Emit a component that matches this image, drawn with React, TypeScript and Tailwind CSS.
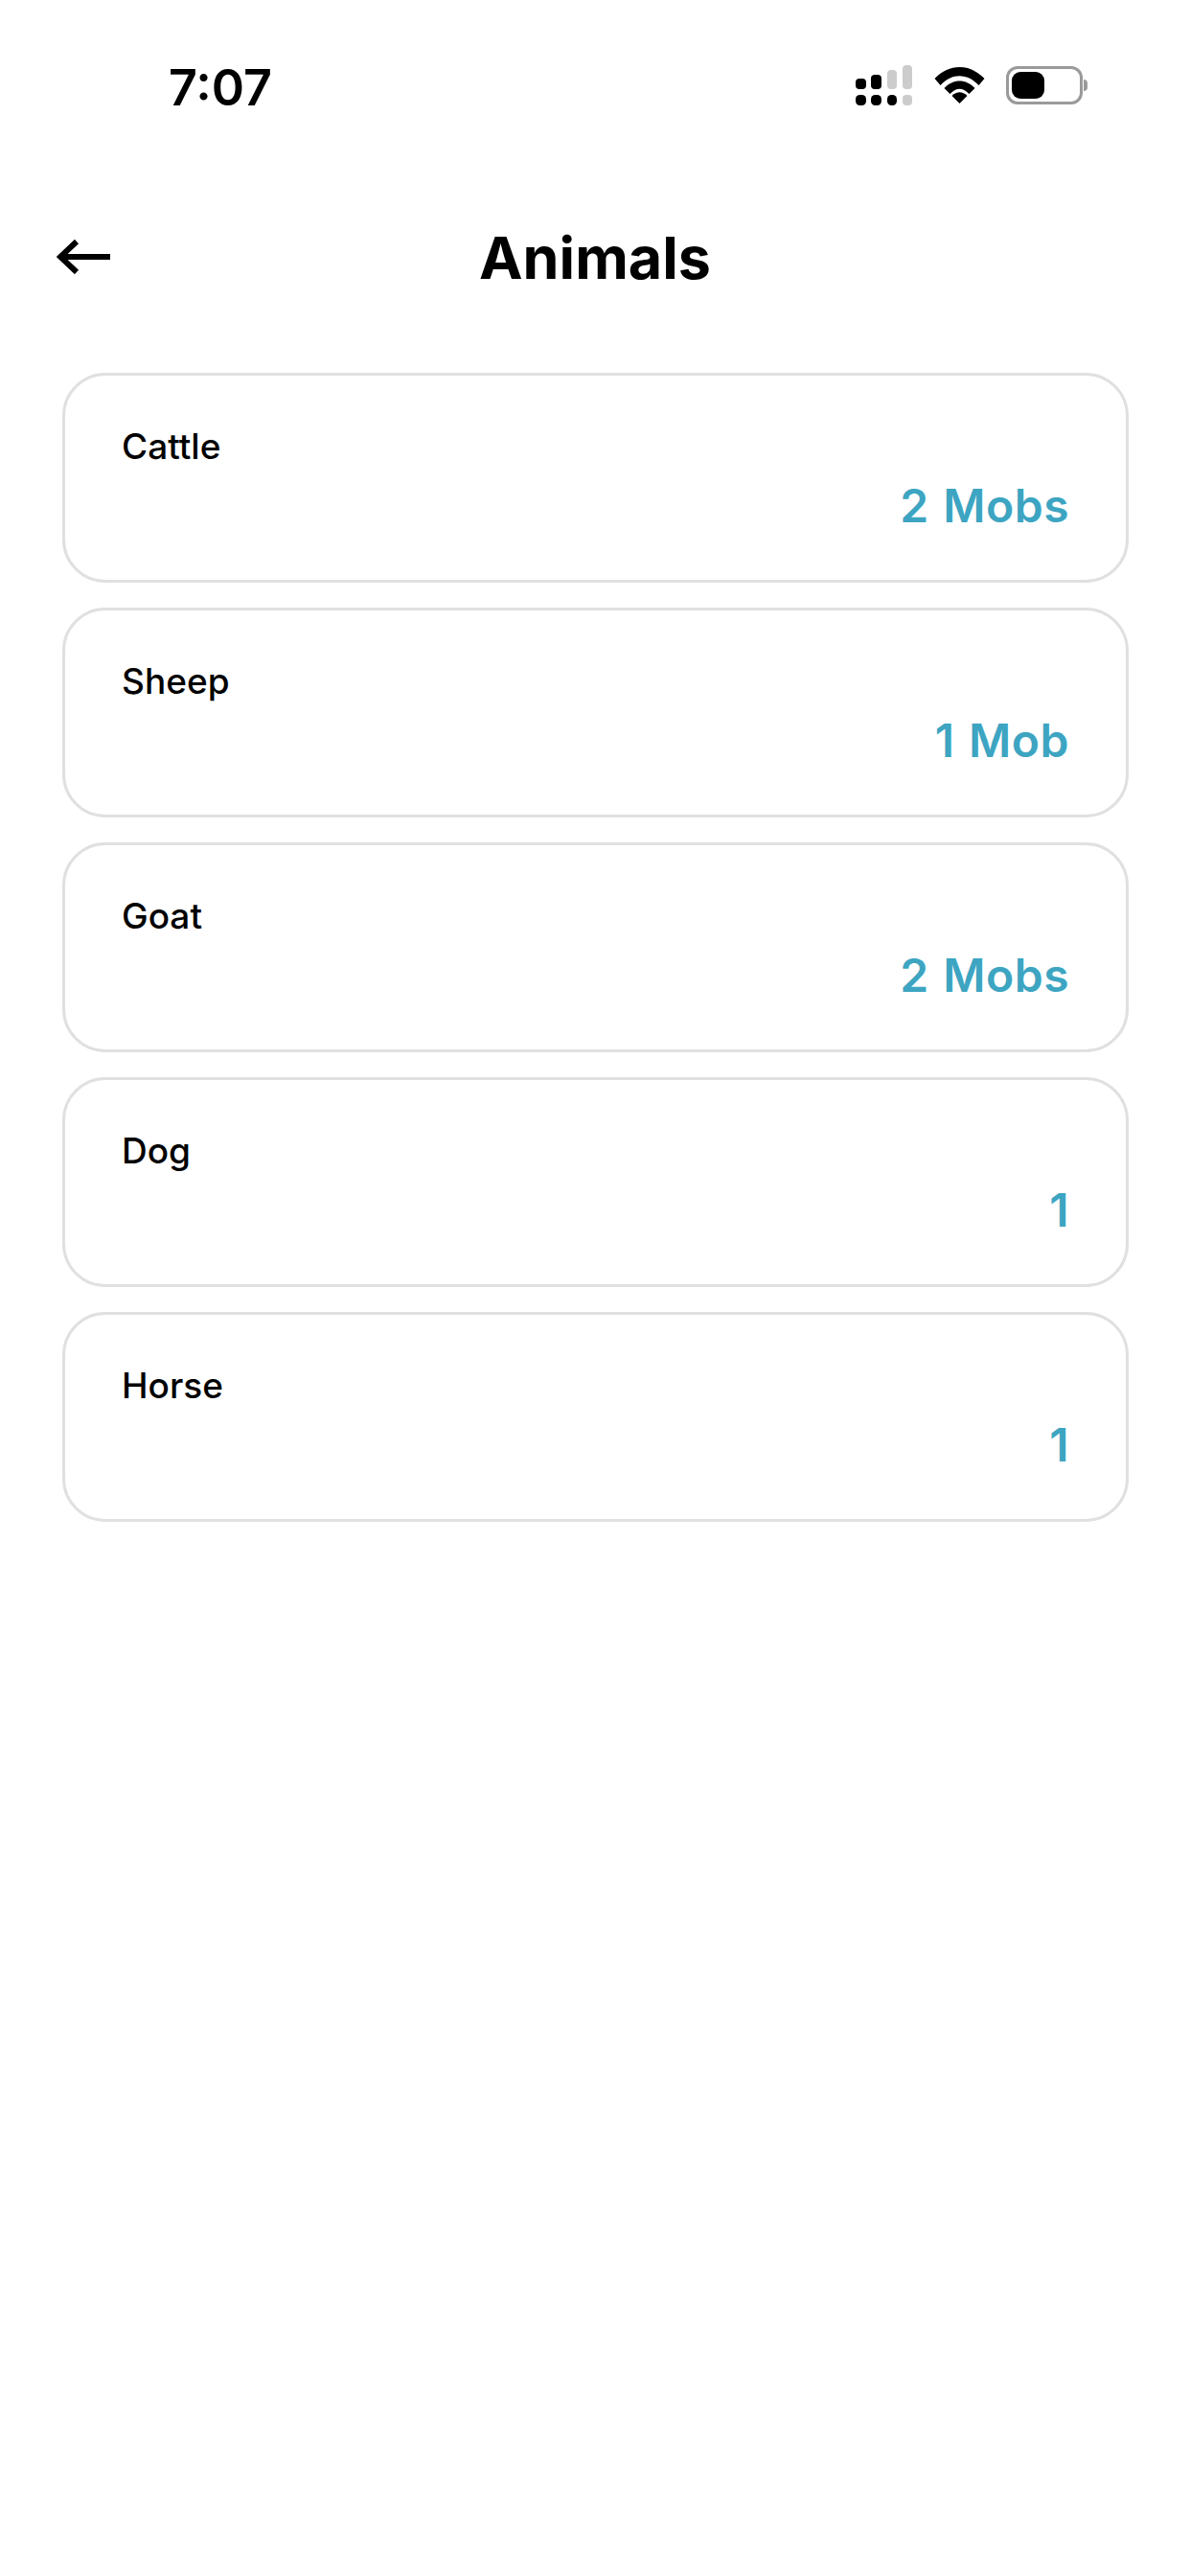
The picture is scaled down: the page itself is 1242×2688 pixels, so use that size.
const animals = [
  { name: "Cattle", count: "2 Mobs" },
  { name: "Sheep", count: "1 Mob" },
  { name: "Goat", count: "2 Mobs" },
  { name: "Dog", count: "1" },
  { name: "Horse", count: "1" },
];

const StatusIcons = () => (
  <div className="flex items-center gap-[22px]">
    {/* signal */}
    <svg width="61" height="42" viewBox="0 0 61 42">
      <rect x="1" y="14" width="11" height="11" rx="4" fill="#000" />
      <rect x="17" y="10" width="11" height="15" rx="4" fill="#000" />
      <rect x="34" y="5" width="10" height="20" rx="4" fill="#ccc" />
      <rect x="50" y="0" width="10" height="25" rx="4" fill="#ccc" />
      <rect x="1" y="31" width="11" height="11" rx="4.5" fill="#000" />
      <rect x="17" y="31" width="11" height="11" rx="4.5" fill="#000" />
      <rect x="34" y="31" width="10" height="11" rx="4.5" fill="#000" />
      <rect x="50" y="31" width="10" height="11" rx="4" fill="#ccc" />
    </svg>
    {/* wifi */}
    <svg width="53" height="40" viewBox="0 0 52 40">
      <path d="M0 13 C15 -3 37 -3 52 13 L46 20 C34 7 18 7 6 20 Z" fill="#000" />
      <path d="M10 23 C19 13 33 13 42 23 L36 29 C29 22 23 22 16 29 Z" fill="#000" />
      <path d="M18 31 C23 26 29 26 34 31 L26 39 Z" fill="#000" />
    </svg>
    {/* battery */}
    <div className="flex items-center gap-[1px]">
      <div className="flex h-[40px] w-[80px] items-center rounded-[12px] border-[3px] border-[#9a9a9a] p-[3px]">
        <div className="h-full w-[34px] rounded-[9px] bg-black" />
      </div>
      <div className="h-[12px] w-[4px] rounded-r-full bg-[#9a9a9a]" />
    </div>
  </div>
);

export default function App() {
  return (
    <div className="min-h-[2688px] w-[1242px] bg-white font-['Inter',sans-serif] text-black">
      <div className="flex h-[224px] items-start justify-between pl-[176px] pr-[107px] pt-[60px]">
        <span className="text-[52px] leading-[64px] font-semibold">7:07</span>
        <div className="pt-[8px]">
          <StatusIcons />
        </div>
      </div>

      <header className="relative flex h-[90px] items-center justify-center">
        <svg
          className="absolute left-[59px] top-[26px]"
          width="56"
          height="36"
          viewBox="0 0 56 36"
          fill="none"
          stroke="#000"
          strokeWidth="6"
        >
          <path d="M56 18H4" />
          <path d="M21 2L4 18L21 34" />
        </svg>
        <h1 className="text-[61px] leading-[72px] font-bold">Animals</h1>
      </header>

      <div className="mt-[75px] flex flex-col gap-[26px] pl-[65px] pr-[64px]">
        {animals.map((a) => (
          <div
            key={a.name}
            className="h-[219px] rounded-[45px] border-[3px] border-[#e0e0e0] pl-[59px] pr-[59px] pt-[52px]"
          >
            <div className="text-[37px] leading-[44px] font-medium">{a.name}</div>
            <div className="mt-[12px] text-right text-[48px] leading-[56px] font-semibold tracking-[0.5px] text-[#3da5c2] [word-spacing:2px]">
              {a.count}
            </div>
          </div>
        ))}
      </div>
    </div>
  );
}
